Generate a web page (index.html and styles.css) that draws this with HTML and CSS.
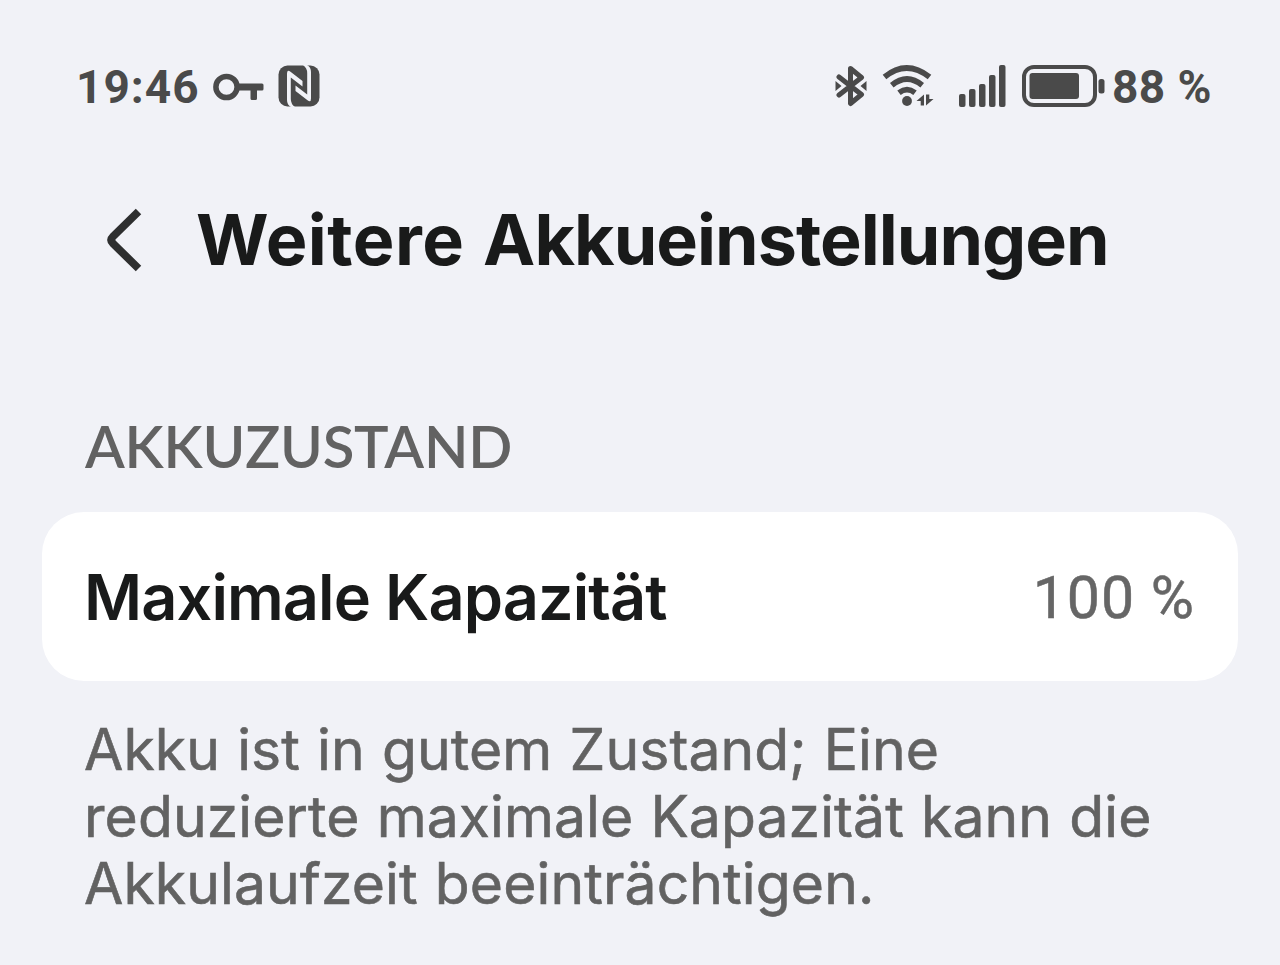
FILE: index.html
```
<!DOCTYPE html>
<html lang="de">

<head>
    <meta charset="UTF-8">
    <meta name="viewport" content="width=device-width, initial-scale=1.0">
    <title>Weitere Akkueinstellungen</title>
    <link rel="stylesheet" href="styles.css">
</head>

<body>
    <div class="status-bar">
        <div class="status-left">
            <span class="clock">19:46</span>
            <svg class="icon-key" width="52" height="42" viewBox="0 0 52 42">
                <circle cx="13.500" cy="22" r="10.600" fill="none" stroke="currentColor" stroke-width="5.500" />
                <path d="M25 18.500h24q1.500 0 1.500 1.500v4q0 1.500-1.500 1.500h-5v8q0 1.500-1.500 1.500h-3.500q-1.500 0-1.500-1.500v-8H25z" fill="currentColor" />
            </svg>
            <svg class="icon-nfc" width="42" height="42" viewBox="0 0 42 42">
                <rect x=".5" y=".5" width="41" height="41" rx="9" fill="currentColor" />
                <path class="cutout" d="M9 8.500Q9 4 12.500 6.800L24.500 16v5.500L12.800 12.500V34q0 5 4.200 8H13q-4-2-4-7z" />
                <path class="cutout" d="M33 33.500q0 4.500-3.500 1.700L17.500 26v-5.500L29.200 29.500V8q0-5-4.200-8H29q4 2 4 7z" />
            </svg>
        </div>
        <div class="status-right">
            <svg class="icon-bluetooth" width="32" height="42" viewBox="0 0 32 42">
                <path d="M4 12l22.500 17.500L15.500 38.500V3.500L26.500 12.500 4 30" fill="none" stroke="currentColor" stroke-width="5" stroke-linejoin="round" stroke-linecap="round" />
                <path d="M.5 16l6 5-6 5zM31.500 16l-6 5 6 5z" fill="currentColor" />
            </svg>
            <svg class="icon-wifi" width="52" height="42" viewBox="0 0 52 42">
                <path d="M2.500 12q22-18 45 0M9.800 20.200q15.200-12.500 30.400 0M17 27.700q8-6 16 0" fill="none" stroke="currentColor" stroke-width="5.700" />
                <circle cx="25" cy="36" r="4.900" fill="currentColor" />
                <path d="M42 29.500v11h-3.300V36H34.500zM44 40.500v-11h3.300V34H51.500z" fill="currentColor" />
            </svg>
            <svg class="icon-signal" width="48" height="42" viewBox="0 0 48 42" fill="currentColor">
                <rect x="0" y="29" width="6.500" height="13" rx="2" />
                <rect x="10" y="24" width="6.500" height="18" rx="2" />
                <rect x="20" y="19" width="6.500" height="23" rx="2" />
                <rect x="30" y="10" width="6.500" height="32" rx="2" />
                <rect x="40" y="0" width="6.500" height="42" rx="2" />
            </svg>
            <svg class="icon-battery" width="83" height="42" viewBox="0 0 83 42">
                <rect x="2" y="2" width="71" height="38" rx="10" fill="none" stroke="currentColor" stroke-width="4" />
                <rect x="7.500" y="8" width="49.500" height="26" rx="3" fill="currentColor" />
                <rect x="76.500" y="14" width="6" height="14.500" rx="2.500" fill="currentColor" />
            </svg>
            <span class="battery-level">88 %</span>
        </div>
    </div>

    <header class="header">
        <svg class="icon-back" width="36" height="64" viewBox="0 0 36 64">
            <path d="M31.500 3.500L6 28.500q-3.500 3.500 0 7L31.500 60.500" fill="none" stroke="currentColor" stroke-width="7.800" />
        </svg>
        <h1 class="title"><span class="title-lead">Weitere</span> Akkueinstellungen</h1>
    </header>

    <main class="content">
        <h2 class="section-title">AKKUZUSTAND</h2>
        <div class="card">
            <span class="card-label">Maximale Kapazität</span>
            <span class="card-value">100 %</span>
        </div>
        <p class="description">Akku ist in gutem Zustand; Eine<br>reduzierte maximale Kapazität kann die<br>Akkulaufzeit beeinträchtigen.</p>
    </main>
</body>

</html>
```
FILE: styles.css
```
* {
    box-sizing: border-box;
}

body {
    margin: 0;
    height: 965px;
    overflow: hidden;
    background-color: #f1f2f7;
    color: #191a1a;
    font-family: Inter, "Noto Sans", sans-serif;
}

svg {
    display: block;
    flex: none;
}

.status-bar {
    display: flex;
    justify-content: space-between;
    height: 108px;
    padding: 65px 68px 0 76px;
    color: #4a4a4a;
}

.status-left,
.status-right {
    display: flex;
    height: 42px;
    align-items: center;
}

.clock,
.battery-level {
    padding-top: 2px;
    font-family: Roboto, sans-serif;
    font-size: 46px;
    font-weight: 700;
    line-height: 42px;
    white-space: nowrap;
}

.clock {
    width: 123px;
    letter-spacing: 1px;
}

.icon-key {
    margin-left: 14px;
}

.icon-nfc {
    margin-left: 13px;
}

.cutout {
    fill: #f1f2f7;
}

.icon-wifi {
    margin-left: 15px;
}

.icon-signal {
    margin-left: 25px;
}

.icon-battery {
    margin-left: 15px;
}

.battery-level {
    width: 100px;
    margin-left: 7px;
    letter-spacing: 0.4px;
}

.header {
    display: flex;
    align-items: center;
    height: 110px;
    margin-top: 77px;
    padding-left: 107px;
}

.icon-back {
    color: #2e2f2f;
}

.title {
    margin: 0 0 0 53px;
    font-size: 70px;
    font-weight: 700;
    letter-spacing: -0.95px;
    word-spacing: 3px;
    line-height: 110px;
    white-space: nowrap;
}

.title-lead {
    letter-spacing: 0.5px;
}

.content {
    padding: 117px 42px 0;
}

.section-title {
    margin: 0;
    padding-left: 43px;
    color: #626262;
    font-family: Lato, sans-serif;
    font-size: 58px;
    font-weight: 600;
    letter-spacing: -0.2px;
    line-height: 68px;
}

.card {
    display: flex;
    align-items: center;
    justify-content: space-between;
    height: 169px;
    margin-top: 32px;
    padding: 0 43px 0 42px;
    border-radius: 42px;
    background-color: #fff;
}

.card-label {
    font-size: 63px;
    font-weight: 600;
    letter-spacing: -0.9px;
}

.card-value {
    padding-top: 2px;
    color: #666;
    font-family: Roboto, sans-serif;
    font-size: 59px;
    letter-spacing: 1px;
    -webkit-text-stroke: 0.5px currentColor;
}

.description {
    margin: 35px 0 0;
    padding-left: 42px;
    color: #626262;
    font-size: 57px;
    letter-spacing: 0.1px;
    word-spacing: 1px;
    line-height: 67px;
    white-space: nowrap;
    -webkit-text-stroke: 0.6px currentColor;
}
```
